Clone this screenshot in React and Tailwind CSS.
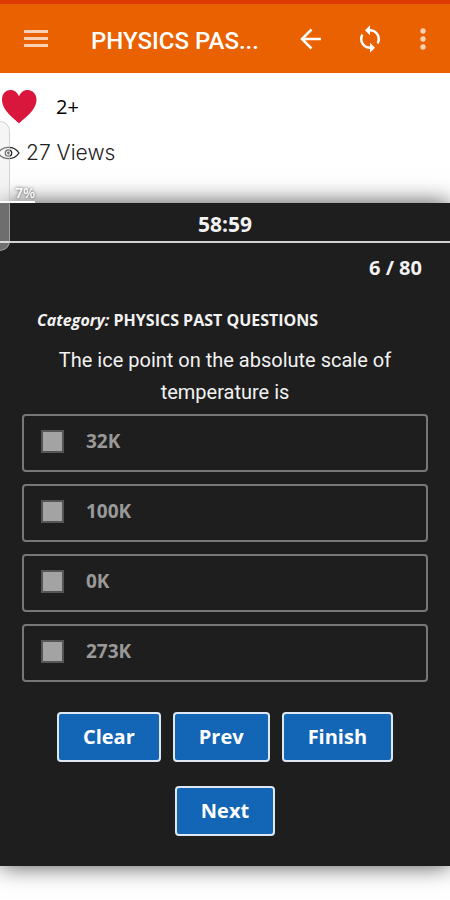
import React, { useState } from 'react';

const OPTIONS = ['32K', '100K', '0K', '273K'];

const ActionButton = ({ children, onClick }) => (
    <button
        type="button"
        onClick={onClick}
        className="h-[50px] px-6 rounded-[4px] border-2 border-[#dfe7f2] bg-[#1266b5] text-white text-[20px] leading-6 font-bold cursor-pointer"
    >
        {children}
    </button>
);

const Header = () => (
    <header className="h-[73px] flex items-center justify-between border-t-4 border-[#dc3c02] bg-[#e96100] pl-6 pr-[22px] text-white font-[Roboto,sans-serif]">
        <button type="button" aria-label="Menu" className="w-6 flex flex-col gap-1 opacity-70">
            <span className="h-[3px] w-full bg-white" />
            <span className="h-[3px] w-full bg-white" />
            <span className="h-[3px] w-full bg-white" />
        </button>
        <h1 className="flex-1 ml-[43px] pt-1 text-[24px] leading-8 font-medium whitespace-nowrap">PHYSICS PAS...</h1>
        <div className="flex items-center gap-[33px]">
            <button type="button" aria-label="Back">
                <svg width="22" height="22" viewBox="0 0 22 22" fill="none" stroke="currentColor" strokeWidth="2.5">
                    <path d="M21 11H3M11.5 1.5L2 11l9.5 9.5" />
                </svg>
            </button>
            <button type="button" aria-label="Refresh">
                <svg width="30" height="30" viewBox="0 0 24 24" fill="currentColor">
                    <path d="M12 4V1L8 5l4 4V6c3.31 0 6 2.69 6 6 0 1.01-.25 1.97-.7 2.8l1.46 1.46C19.54 15.03 20 13.57 20 12c0-4.42-3.58-8-8-8zm0 14c-3.31 0-6-2.69-6-6 0-1.01.25-1.97.7-2.8L5.24 7.74C4.46 8.97 4 10.43 4 12c0 4.42 3.58 8 8 8v3l4-4-4-4v3z" />
                </svg>
            </button>
            <button type="button" aria-label="More" className="opacity-70">
                <svg width="10" height="22" viewBox="0 0 10 22" fill="currentColor">
                    <circle cx="5" cy="3" r="2.7" />
                    <circle cx="5" cy="11" r="2.7" />
                    <circle cx="5" cy="19" r="2.7" />
                </svg>
            </button>
        </div>
    </header>
);

const Stats = () => (
    <section className="h-[130px] pt-4 text-black">
        <div className="flex items-center gap-[18px] h-9">
            <svg width="38" height="36" viewBox="0 0 38 36" fill="#d9173c" aria-hidden="true">
                <path d="M19 34.500C15 30 2 22 2 10.500C2 5 5.500 1 10.500 1C14.500 1 17.500 3.500 19 7.500C20.500 3.500 23.500 1 27.500 1C32.500 1 36.500 5 36.500 10.500C36.500 22 23 30 19 34.500Z" />
            </svg>
            <span className="text-[20px] leading-6">2+</span>
        </div>
        <div className="flex items-center gap-[6px] mt-4 h-6">
            <svg width="20" height="16" viewBox="0 0 20 16" fill="none" stroke="#222" strokeWidth="1.3" aria-hidden="true">
                <path d="M-2 8C3 0.500 14 0.500 19 8C14 15.500 3 15.500-2 8Z" />
                <circle cx="8.500" cy="8" r="3.200" />
                <circle cx="8.500" cy="8" r="0.800" fill="#222" />
            </svg>
            <span className="text-[21px] leading-6 font-light text-[#222] font-[Inter,sans-serif]">27 Views</span>
        </div>
    </section>
);

const App = () => {
    const [selected, setSelected] = useState([]);

    const toggle = (option) => {
        setSelected((prev) =>
            prev.includes(option) ? prev.filter((o) => o !== option) : [...prev, option]
        );
    };

    return (
        <div className="relative min-h-screen bg-white overflow-hidden font-['Open_Sans',sans-serif]">
            <Header />
            <Stats />

            <main className="bg-[#1e1e1e] pb-[30px] text-[#f2f2f2] shadow-[0_0_22px_rgba(0,0,0,0.7)]">
                <div className="h-10 flex items-center justify-center pt-1 border-b-2 border-[#d5d2d2] text-[21px] leading-6 font-bold">
                    58:59
                </div>
                <div className="pt-[13px] pr-7 text-right text-[20px] leading-6 font-bold">6 / 80</div>

                <p className="mt-7 ml-[37px] text-[16px] leading-6 font-bold">
                    <em>Category:</em> PHYSICS PAST QUESTIONS
                </p>
                <h2 className="mt-3 px-10 text-center text-[20px] leading-8 font-[Roboto,sans-serif]">
                    The ice point on the absolute scale of temperature is
                </h2>

                <div className="mt-[6px] mx-[22px] flex flex-col gap-3">
                    {OPTIONS.map((option) => (
                        <label
                            key={option}
                            className="h-[58px] flex items-center gap-[22px] pl-[17px] pb-1 rounded-[4px] border-2 border-[#777] text-[19px] leading-6 font-bold text-[#999] cursor-pointer"
                        >
                            <input
                                type="checkbox"
                                checked={selected.includes(option)}
                                onChange={() => toggle(option)}
                                className="appearance-none size-[23px] border-2 border-[#555] bg-[#a3a3a3] checked:bg-[#1266b5]"
                            />
                            {option}
                        </label>
                    ))}
                </div>

                <div className="mt-[30px] px-10 flex flex-wrap justify-center gap-x-3 gap-y-6">
                    <ActionButton onClick={() => setSelected([])}>Clear</ActionButton>
                    <ActionButton>Prev</ActionButton>
                    <ActionButton>Finish</ActionButton>
                    <ActionButton>Next</ActionButton>
                </div>
            </main>

            {/* edge handle and progress read-out float over the page */}
            <div className="absolute left-0 top-[121px] w-[10px] h-[130px] rounded-r-[10px] border border-l-0 border-[#bbb]/60 bg-[#e5e5e5]/40" />
            <div className="absolute left-0 top-[185px] w-[35px] h-[18px] border-b-2 border-white text-right text-[14px] leading-4 font-semibold text-white [text-shadow:0_0_3px_#444]">
                7%
            </div>
        </div>
    );
};

export default App;
